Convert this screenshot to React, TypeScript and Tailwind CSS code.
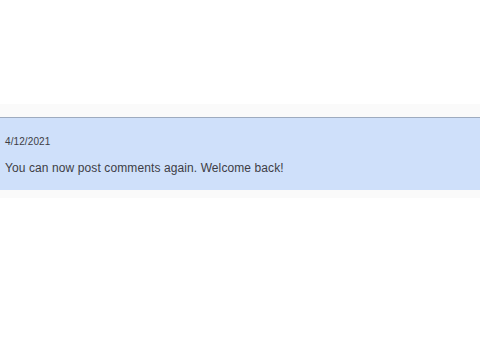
export default function App() {
  return (
    <div className="min-h-[360px] w-[480px] bg-white pt-[104px] font-['Liberation_Sans',Arial,sans-serif] text-[#3d3d45]">
      <div className="bg-[#fafafa] pt-[13px] pb-[8px]">
        <div className="h-[73px] border-t border-[#9eabbf] bg-[#cfe0fa] px-[5px] pt-[18px]">
          <div className="text-[10px] leading-[12px] tracking-[0.1px]">4/12/2021</div>
          <div className="mt-[13px] text-[12px] leading-[14px] tracking-[0.1px]">
            You can now post comments again. Welcome back!
          </div>
        </div>
      </div>
    </div>
  );
}
